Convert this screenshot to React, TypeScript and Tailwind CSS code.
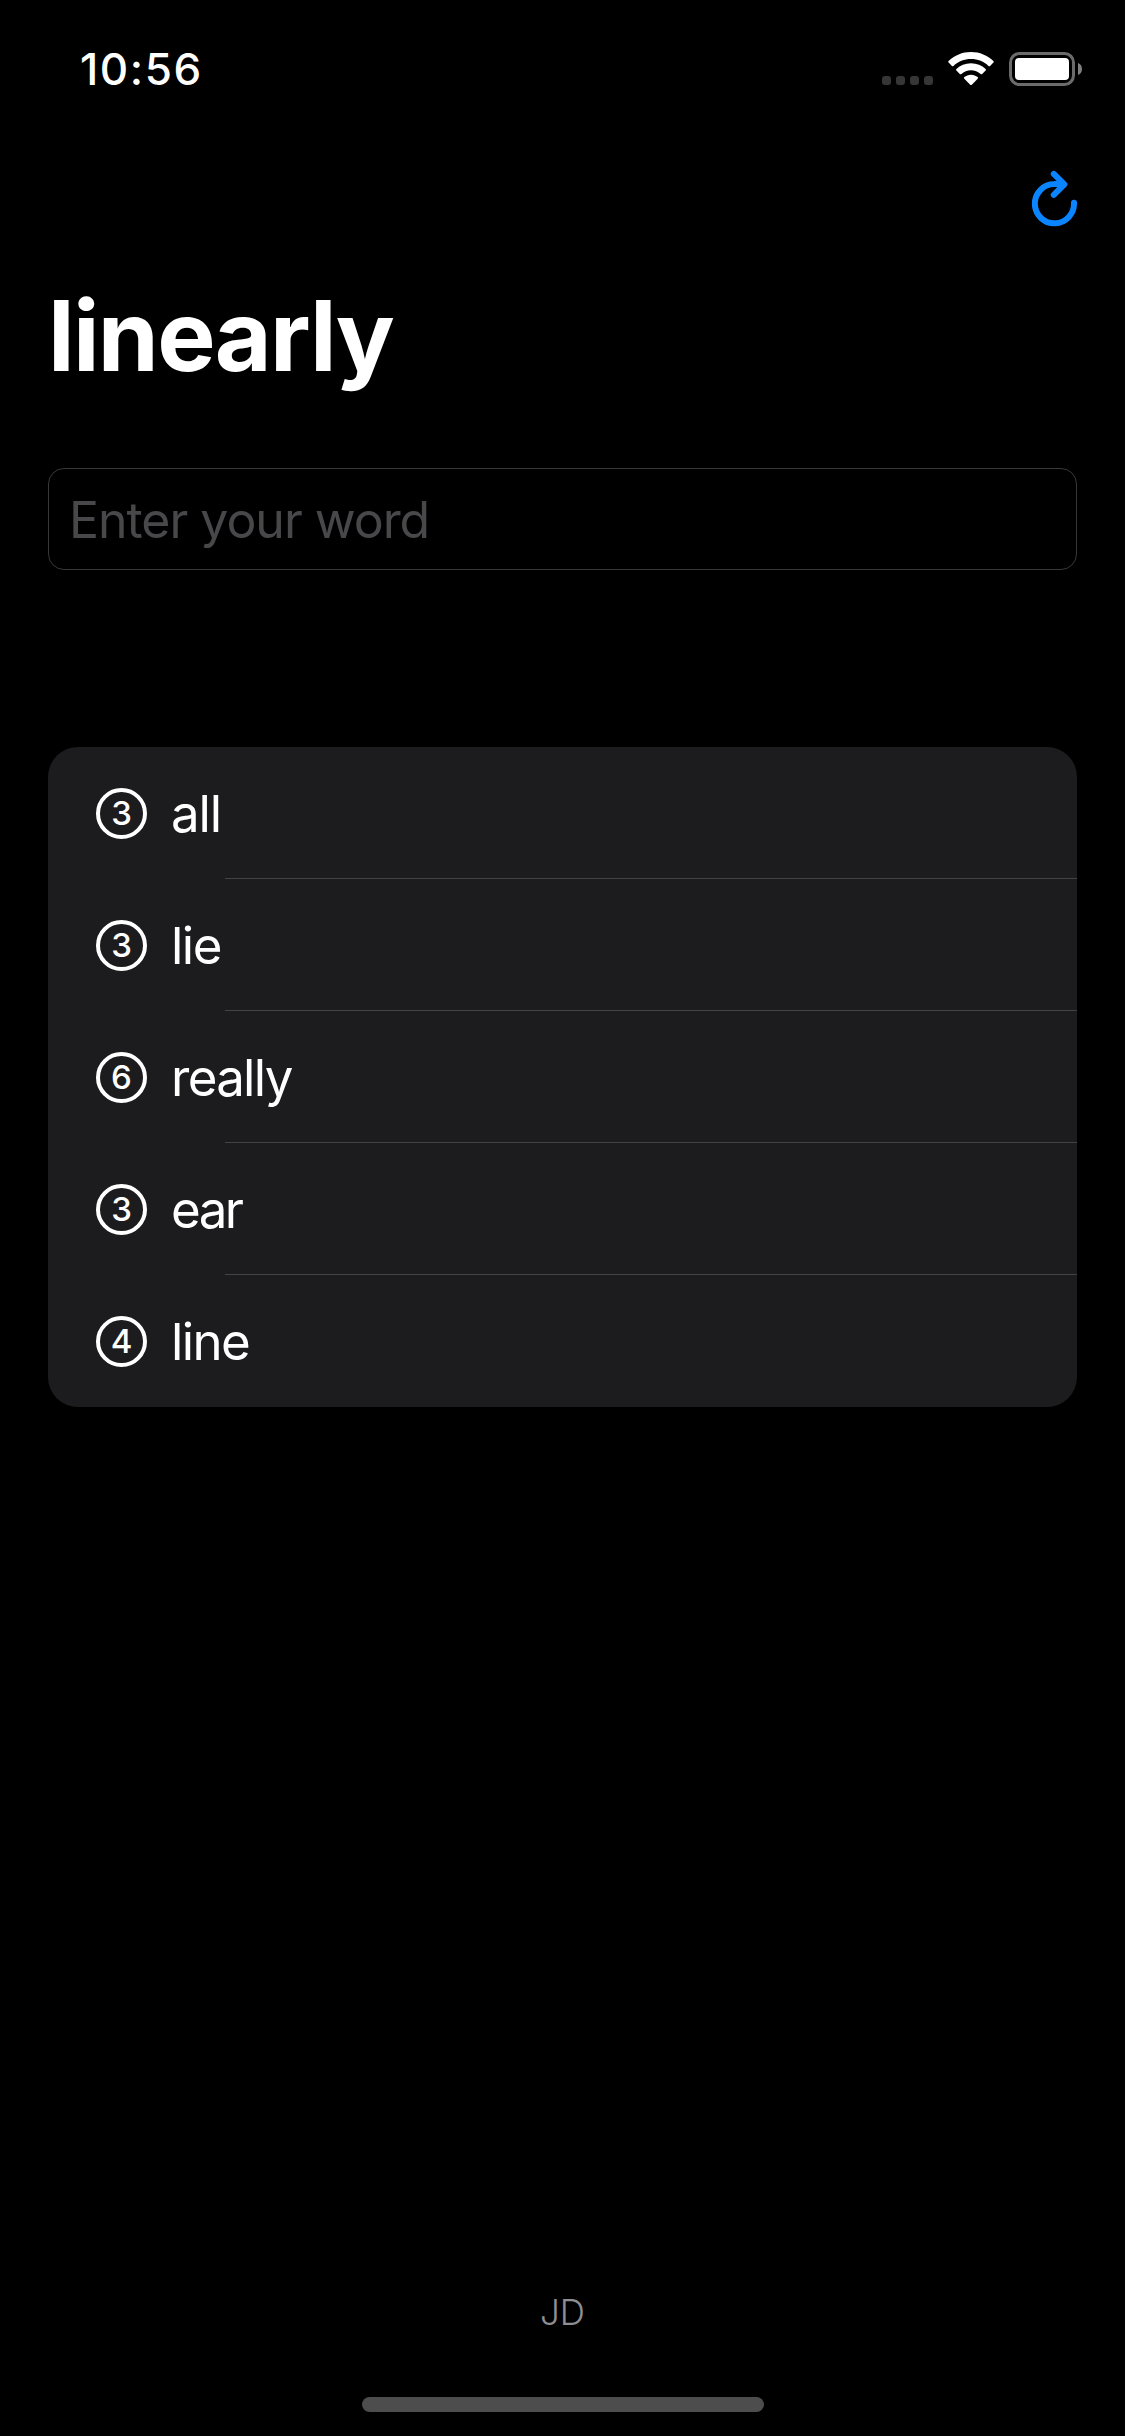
type Word = { text: string; tracking: string };

const words: Word[] = [
  { text: 'all', tracking: 'tracking-[-1.1px]' },
  { text: 'lie', tracking: 'tracking-[-1.5px]' },
  { text: 'really', tracking: 'tracking-[-1.7px]' },
  { text: 'ear', tracking: 'tracking-[-2.5px]' },
  { text: 'line', tracking: 'tracking-[-1.6px]' },
];

function CellularDots() {
  return (
    <div className="mt-6 flex gap-[5px]">
      {[0, 1, 2, 3].map((i) => (
        <span key={i} className="size-[9px] rounded-[3px] bg-[#363636]" />
      ))}
    </div>
  );
}

function WifiIcon() {
  return (
    <svg width="46" height="34" viewBox="0 0 46 34" className="ml-[15px]" fill="#fff">
      <path d="M23 0C31.7 0 39.6 3.4 45.4 8.9C45.9 9.4 45.9 10.1 45.4 10.6L42.1 13.9C41.6 14.4 41 14.4 40.5 13.9C35.9 9.6 29.8 7 23 7C16.2 7 10.1 9.6 5.5 13.9C5 14.4 4.4 14.4 3.9 13.9L0.6 10.6C0.1 10.1 0.1 9.4 0.6 8.9C6.4 3.4 14.3 0 23 0Z" />
      <path d="M23 11.2C28.7 11.2 33.8 13.4 37.6 16.9C38.1 17.4 38.1 18.1 37.6 18.6L34.2 22C33.7 22.5 33.1 22.4 32.6 22C30.1 19.7 26.7 18.2 23 18.2C19.3 18.2 15.9 19.7 13.4 22C12.9 22.4 12.3 22.5 11.8 22L8.4 18.6C7.9 18.1 7.9 17.4 8.4 16.9C12.2 13.4 17.3 11.2 23 11.2Z" />
      <path d="M23 22.7C25.6 22.7 27.9 23.6 29.7 25.1C30.2 25.6 30.2 26.2 29.7 26.7L23.8 32.7C23.3 33.2 22.7 33.2 22.2 32.7L16.3 26.7C15.8 26.2 15.8 25.6 16.3 25.1C18.1 23.6 20.4 22.7 23 22.7Z" />
    </svg>
  );
}

function BatteryIcon() {
  return (
    <svg width="74" height="34" viewBox="0 0 74 34" className="ml-[15px]" fill="none">
      <rect x="1.5" y="1.5" width="63" height="31" rx="9" stroke="#6b6b6b" strokeWidth="3" />
      <rect x="6" y="6" width="54" height="22" rx="4" fill="#fff" />
      <path d="M69 11C71.6 12 73 14.3 73 17S71.6 22 69 23Z" fill="#808080" />
    </svg>
  );
}

function RefreshIcon() {
  return (
    <svg width="46" height="58" viewBox="0 0 46 58" fill="none" stroke="#0a84ff" strokeWidth="6" strokeLinecap="round" strokeLinejoin="round">
      <path d="M42 32.7A19.6 19.6 0 1 1 22.3 14.1Q27 13.9 31.5 14.8" />
      <path d="M21.8 3.9L32.3 14.4L21.8 24.9" />
    </svg>
  );
}

function StatusBar() {
  return (
    <header className="flex h-[138px] items-center justify-between pr-[42px] pl-20">
      <time className="text-[44px] leading-none font-medium tracking-[1.6px]">10:56</time>
      <div className="flex items-start">
        <CellularDots />
        <WifiIcon />
        <BatteryIcon />
      </div>
    </header>
  );
}

function WordRow({ word, last }: { word: Word; last: boolean }) {
  return (
    <li className="flex h-[132px] flex-col">
      <div className="flex flex-1 items-center pt-0.5 pl-12">
        <span className="flex size-[51px] items-center justify-center rounded-full border-4 border-white text-[33px] leading-none font-medium">
          {word.text.length}
        </span>
        <span className={`ml-6 text-[51px] leading-none ${word.tracking}`}>{word.text}</span>
      </div>
      <div className={last ? 'h-px' : 'ml-[177px] h-px bg-[#434346]'} />
    </li>
  );
}

export default function App() {
  return (
    <div className="flex h-[2436px] w-[1125px] flex-col bg-black font-[Inter,sans-serif] text-white">
      <StatusBar />
      <div className="flex h-[132px] justify-end pt-8 pr-[47px]">
        <button className="h-[58px]" aria-label="Restart">
          <RefreshIcon />
        </button>
      </div>
      <main className="flex flex-1 flex-col px-12">
        <h1 className="h-[132px] text-[98px] leading-[132px] font-bold tracking-[-1.65px]">linearly</h1>
        <input
          placeholder="Enter your word"
          className="mt-[66px] h-[102px] rounded-[16px] border border-[#38383a] bg-transparent px-5 pt-0.5 text-[50px] tracking-[-1.03px] placeholder:text-[#48484a]"
        />
        <ul className="mt-[177px] overflow-hidden rounded-[30px] bg-[#1c1c1e]">
          {words.map((word, i) => (
            <WordRow key={word.text} word={word} last={i === words.length - 1} />
          ))}
        </ul>
      </main>
      <footer className="flex flex-col items-center pb-6">
        <p className="text-[35px] leading-10 font-light text-[#8e8e93]">JD</p>
        <div className="mt-[65px] h-[15px] w-[402px] rounded-full bg-[#4d4d4d]" />
      </footer>
    </div>
  );
}
